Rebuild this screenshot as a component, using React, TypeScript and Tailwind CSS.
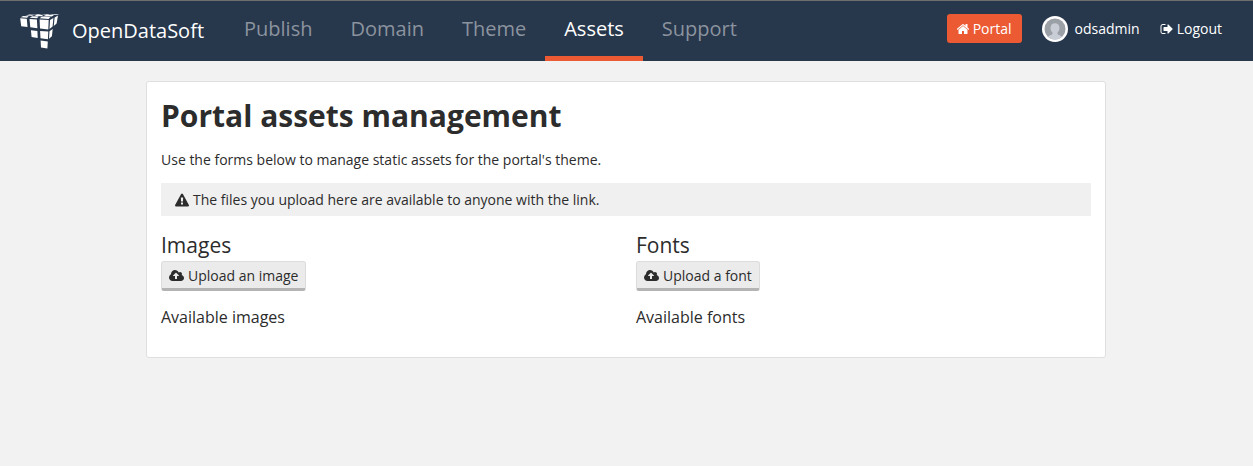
import type { ReactNode } from 'react'

const icons = {
  home: {
    box: '64 0 1536 1792',
    d: 'M1408 992v480q0 26-19 45t-45 19h-384v-384h-256v384h-384q-26 0-45-19t-19-45v-480q0-1 .5-3t.5-3l575-474 575 474q1 2 1 6zm223-69l-62 74q-8 9-21 11h-3q-13 0-21-7l-692-577-692 577q-12 8-24 7-13-2-21-11l-62-74q-8-10-7-23.5t11-21.5l719-599q32-26 76-26t76 26l244 204v-195q0-14 9-23t23-9h192q14 0 23 9t9 23v408l219 182q10 8 11 21.5t-7 23.5z',
  },
  signOut: {
    box: '0 0 1664 1792',
    d: 'M704 1440q0 4 1 20t.5 26.5-3 23.5-10 19.5-20.5 6.5h-320q-119 0-203.5-84.5t-84.5-203.5v-704q0-119 84.5-203.5t203.5-84.5h320q13 0 22.5 9.5t9.5 22.5q0 4 1 20t.5 26.5-3 23.5-10 19.5-20.5 6.5h-320q-66 0-113 47t-47 113v704q0 66 47 113t113 47h312l11.5 1 11.5 3 8 5.5 7 9 2 13.5zm928-544q0 26-19 45l-544 544q-19 19-45 19t-45-19-19-45v-288h-448q-26 0-45-19t-19-45v-384q0-26 19-45t45-19h448v-288q0-26 19-45t45-19 45 19l544 544q19 19 19 45z',
  },
  warning: {
    box: '0 -64 1792 1792',
    d: 'M1024 1375v-190q0-14-9.5-23.5t-22.5-9.5h-192q-13 0-22.5 9.5t-9.5 23.5v190q0 14 9.5 23.5t22.5 9.5h192q13 0 22.5-9.5t9.5-23.5zm-2-374l18-459q0-12-10-19-13-11-24-11h-220q-11 0-24 11-10 7-10 21l17 457q0 10 10 16.5t24 6.5h185q14 0 23.5-6.5t10.5-16.5zm-14-934l768 1408q35 63-2 126-17 29-46.5 46t-63.5 17h-1536q-34 0-63.5-17t-46.5-46q-37-63-2-126l768-1408q17-31 47-49t65-18 65 18 47 49z',
  },
  cloudUpload: {
    box: '-64 0 1920 1792',
    d: 'M1216 864q0-14-9-23l-352-352q-9-9-23-9t-23 9l-351 351q-10 12-10 24 0 14 9 23t23 9h224v352q0 13 9.5 22.5t22.5 9.5h192q13 0 22.5-9.5t9.5-22.5v-352h224q13 0 22.5-9.5t9.5-22.5zm640 288q0 159-112.5 271.5t-271.5 112.5h-1088q-185 0-316.5-131.5t-131.5-316.5q0-130 70-240t188-165q-2-30-2-43 0-212 150-362t362-150q156 0 285.5 87t188.5 231q71-62 166-62 106 0 181 75t75 181q0 76-41 138 130 31 213.5 135.5t83.5 238.5z',
  },
}

function Icon({ name, className }: { name: keyof typeof icons; className: string }) {
  return (
    <svg viewBox={icons[name].box} fill="currentColor" aria-hidden="true" className={className}>
      <path d={icons[name].d} />
    </svg>
  )
}

function Logo() {
  return (
    <svg viewBox="0 0 40 36" fill="#fff" aria-hidden="true" className="h-9 w-10">
      {/* top faces */}
      <path d="M.6 4.300 3.200 3 8.800 3.300 7 4.700ZM9.600 4.700 12.200 3.300 18.600 3.600 17 5.200ZM19.600 5.300 22 3.600 30.400 3.900 28.600 5.900ZM5.400 2.500 9.400 1.600 14.600 1.800 12 2.800ZM14 2.900 17 1.800 23.400 1.900 21.400 3.200ZM23.400 3.200 26.200 1.800 34 1.900 31.800 3.500ZM13 1.400 17 .9 22 .9 19.400 1.500ZM21.400 1.500 24.600 .9 30.400 .9 28 1.600ZM29.600 1.500 32.400 .9 39.600 .9 36.400 1.800Z" />
      {/* front faces */}
      <path d="M.2 5.300 6.800 5.800 7.500 14 1.200 13.200ZM9.500 5.900 16.900 6.400 17.400 15.200 10.300 14.300ZM19.600 6.600 28.700 7.100 28.300 16.400 20 15.500ZM10.900 17.300 17.400 17.900 17.700 25 11.600 24.100ZM20.100 17.900 28.300 18.600 27.900 26.200 20.500 25.300ZM20.600 27.600 27.800 28.400 27.400 35.500 21 34.600Z" />
      {/* side faces */}
      <path d="M30 6.900 33.400 5 32.600 13.600 29.500 16ZM34.600 4.400 38 2.600 36.600 10.600 33.800 12.900ZM29.500 18.300 32.700 16 31.900 23.200 29 25.800Z" />
    </svg>
  )
}

function Avatar() {
  return (
    <svg viewBox="0 0 26 26" aria-hidden="true" className="size-[26px]">
      <clipPath id="avatar-disc">
        <circle cx="13" cy="13" r="10.5" />
      </clipPath>
      <circle cx="13" cy="13" r="13" fill="#fff" />
      <g clipPath="url(#avatar-disc)">
        <path d="M0 0h26v26H0z" fill="#9b9fa6" />
        <path
          d="M13 7.2c2.8 0 4.5 1.9 4.5 4.8 0 2-.9 3.7-2 4.6v1.3c.4 1 4 1.400 4.800 3.600V26H5.700v-4.500c.8-2.200 4.400-2.600 4.800-3.600v-1.300c-1.100-.9-2-2.600-2-4.600 0-2.900 1.700-4.800 4.500-4.800Z"
          fill="#c9cdd5"
        />
      </g>
    </svg>
  )
}

const navItems = ['Publish', 'Domain', 'Theme', 'Assets', 'Support']

function NavLink({ label, active }: { label: string; active: boolean }) {
  return (
    <a
      href="#"
      aria-current={active ? 'page' : undefined}
      className={
        active
          ? 'flex items-center border-b-5 border-[#eb5a33] px-[19px] text-white'
          : 'flex items-center border-b-5 border-transparent px-[19px] text-[#8b939e]'
      }
    >
      {label}
    </a>
  )
}

function AssetSection({ title, action, children }: { title: string; action: string; children: ReactNode }) {
  return (
    <section className="flex flex-col items-start">
      <h2 className="text-[21px] leading-8">{title}</h2>
      <button
        type="button"
        className="flex h-[30px] items-center gap-1 rounded-[3px] border border-b-3 border-[#dcdcdc] border-b-[#b4b4b4] bg-[#ebebeb] px-[7px] pt-[2px] text-sm"
      >
        <Icon name="cloudUpload" className="h-[14px] w-[15px]" />
        {action}
      </button>
      <h3 className="mt-[14px] text-base leading-6">{children}</h3>
    </section>
  )
}

export default function App() {
  return (
    <div className="min-h-screen bg-[#f2f2f2] font-['Open_Sans',sans-serif] text-sm text-[#2c2c2c]">
      <header className="flex h-[61px] border-t border-[#6f6f6d] bg-[#27374c] pr-[31px] pl-5 text-white">
        <a href="#" className="flex items-center gap-3 pr-[21px] text-xl">
          <Logo />
          OpenDataSoft
        </a>
        <nav className="flex text-xl">
          {navItems.map((label) => (
            <NavLink key={label} label={label} active={label === 'Assets'} />
          ))}
        </nav>
        <div className="ml-auto flex items-center gap-5 pb-[5px]">
          <a href="#" className="flex h-[29px] items-center gap-1 rounded-[3px] bg-[#eb5a33] px-[10px]">
            <Icon name="home" className="h-[14px] w-3" />
            Portal
          </a>
          <a href="#" className="flex items-center gap-[7px]">
            <Avatar />
            odsadmin
          </a>
          <a href="#" className="flex items-center gap-1">
            <Icon name="signOut" className="h-[14px] w-[13px]" />
            Logout
          </a>
        </div>
      </header>
      <div className="pt-5 pr-px">
        <main className="mx-auto max-w-[960px] rounded-[3px] border border-[#dfdfdf] bg-white px-[14px] pt-3 pb-7">
          <h1 className="text-[30px] leading-11 font-bold">Portal assets management</h1>
          <p className="mt-3 leading-5">Use the forms below to manage static assets for the portal's theme.</p>
          <p className="mt-[13px] flex h-[33px] items-center gap-1 bg-[#f0f0f0] px-[14px]">
            <Icon name="warning" className="size-[14px]" />
            The files you upload here are available to anyone with the link.
          </p>
          <div className="mt-[13px] grid grid-cols-2 gap-5">
            <AssetSection title="Images" action="Upload an image">
              Available images
            </AssetSection>
            <AssetSection title="Fonts" action="Upload a font">
              Available fonts
            </AssetSection>
          </div>
        </main>
      </div>
    </div>
  )
}
